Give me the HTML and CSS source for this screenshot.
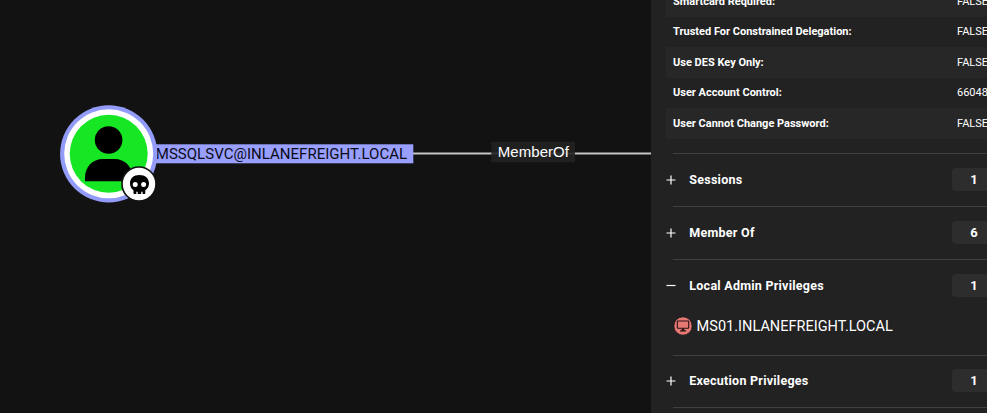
FILE: index.html
```html
<!DOCTYPE html>
<html lang="en">
<head>
<meta charset="utf-8">
<title>Graph</title>
<link rel="stylesheet" href="styles.css">
</head>
<body>
<div class="app">
  <main class="graph">
    <svg width="651" height="413" viewBox="0 0 651 413">
      <path class="edge" d="M156 153.6H651"/>
      <rect class="node-label-bg" x="140" y="144.3" width="273.3" height="19"/>
      <text class="node-label" x="155.800" y="159.2" textLength="251.300">MSSQLSVC@INLANEFREIGHT.LOCAL</text>
      <rect class="edge-label-bg" x="491.3" y="141.7" width="83.7" height="20.6"/>
      <text class="edge-label" x="497.8" y="157.3" textLength="71.2">MemberOf</text>
      <circle class="ring" cx="108.7" cy="153.9" r="48.6"/>
      <circle class="disc" cx="108.7" cy="153.8" r="44.5"/>
      <circle class="avatar" cx="108.7" cy="153.8" r="39"/>
      <circle cx="108.6" cy="140" r="13.8"/>
      <path d="M85 181.3V177.5C85 167 92.500 159 103 159H114.500C125 159 132.500 167 132.500 177.500V181.300Z"/>
      <circle class="badge" cx="139" cy="184" r="17"/>
      <path fill-rule="evenodd" d="M139.400 175C133.600 175 130 178.500 130 183.300C130 186.500 131.300 189 133.500 190.300V193.300Q133.500 194 134.300 194H136.300V191.800H137.700V194H141.200V191.800H142.600V194H144.500Q145.300 194 145.300 193.300V190.300C147.500 189 149 186.500 149 183.300C149 178.500 145.200 175 139.400 175ZM135.200 182A2.500 2.500 0 1 1 135.200 187A2.500 2.500 0 1 1 135.200 182ZM143.600 182A2.500 2.500 0 1 1 143.600 187A2.500 2.500 0 1 1 143.600 182Z"/>
    </svg>
  </main>
  <aside class="panel">
    <dl class="props">
      <div class="prop"><dt>Smartcard Required:</dt><dd>FALSE</dd></div>
      <div class="prop"><dt>Trusted For Constrained Delegation:</dt><dd>FALSE</dd></div>
      <div class="prop"><dt>Use DES Key Only:</dt><dd>FALSE</dd></div>
      <div class="prop"><dt>User Account Control:</dt><dd>66048</dd></div>
      <div class="prop"><dt>User Cannot Change Password:</dt><dd>FALSE</dd></div>
    </dl>
    <section class="group">
      <div class="head"><svg class="sign" viewBox="0 0 10 10"><path d="M.5 5H9.500M5 .5V9.500"/></svg><h2>Sessions</h2><span class="count">1</span></div>
    </section>
    <section class="group">
      <div class="head"><svg class="sign" viewBox="0 0 10 10"><path d="M.5 5H9.500M5 .5V9.500"/></svg><h2>Member Of</h2><span class="count">6</span></div>
    </section>
    <section class="group open">
      <div class="head"><svg class="sign" viewBox="0 0 10 10"><path d="M.5 4.500H9.500"/></svg><h2>Local Admin Privileges</h2><span class="count">1</span></div>
      <div class="entry">
        <svg class="host" viewBox="0 0 20 20"><circle cx="10" cy="10" r="9.200"/><rect class="screen" x="4.300" y="5" width="11.400" height="7.300" rx=".7"/><path class="stand" d="M8.800 12.500H11.200V14.200H13V15.600H7V14.200H8.800Z"/></svg>
        <span>MS01.INLANEFREIGHT.LOCAL</span>
      </div>
    </section>
    <section class="group short">
      <div class="head"><svg class="sign" viewBox="0 0 10 10"><path d="M.5 5H9.500M5 .5V9.500"/></svg><h2>Execution Privileges</h2><span class="count">1</span></div>
    </section>
    <section class="group"></section>
  </aside>
</div>
</body>
</html>
```
FILE: styles.css
```css
body {
  margin: 0;
  background: #121212;
  font-family: Roboto, "Liberation Sans", sans-serif;
  color: #fff;
  overflow: hidden;
}
.app { display: flex; height: 413px; overflow: hidden; }
.graph { flex: 0 0 651px; }
.graph svg { display: block; }
.edge { stroke: #c4c4c4; stroke-width: 2; }
.node-label-bg { fill: #999fff; }
.node-label { font-size: 15px; fill: #0b0b16; }
.edge-label-bg { fill: #222; fill-opacity: .9; }
.edge-label { font: 15px "Liberation Sans", sans-serif; fill: #fff; }
.ring { fill: #929bf7; }
.disc { fill: #fff; }
.avatar { fill: #17e625; }
.badge { fill: #fff; stroke: #121212; stroke-width: 1.6; }
.panel { flex: 1; min-width: 0; background: #222; overflow: hidden; }
.props { margin: -14px 0 14.500px 15px; }
.prop {
  display: flex;
  align-items: center;
  height: 30.500px;
  padding-left: 7px;
  font-size: 11px;
  white-space: nowrap;
}
.prop:nth-child(odd) { background: #272727; }
.prop dt { flex: 0 0 284px; font-weight: 700; }
.prop dd { margin: 0; }
.group { height: 52px; margin-left: 22px; border-top: 1px solid #404040; }
.group.open { height: 95px; }
.group.short { height: 51px; }
.head { display: flex; align-items: center; height: 51px; margin-left: -7px; }
.sign { flex: none; width: 10px; height: 10px; fill: none; stroke: #fff; stroke-width: 1.2; }
.head h2 { flex: 0 0 262.700px; margin: 0 0 0 13.300px; font-size: 12.500px; font-weight: 700; letter-spacing: .25px; }
.short .head { height: 49px; }
.count {
  flex: 0 0 44px;
  height: 23px;
  border-radius: 4px;
  background: #2d2d2d;
  font-size: 13px;
  font-weight: 700;
  line-height: 23px;
  text-align: center;
}
.entry { display: flex; align-items: center; height: 29px; font-size: 14.500px; white-space: nowrap; }
.entry span { margin-left: -.4px; padding-top: 1px; letter-spacing: .02px; }
.host { flex: none; width: 20px; height: 20px; margin-right: 4px; fill: #e67873; }
.host circle { stroke: #111; stroke-width: .8; }
.host .screen { stroke: #251313; stroke-width: 1.1; }
.host .stand { fill: #251313; }
```
